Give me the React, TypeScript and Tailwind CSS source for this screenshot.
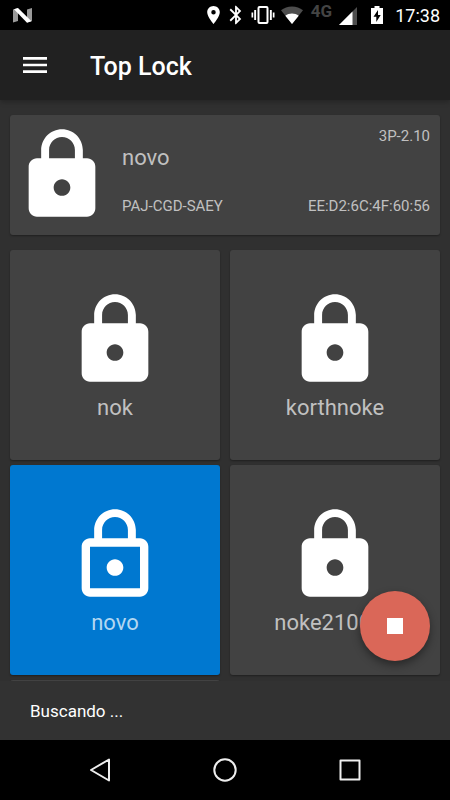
import { useState } from 'react';
import clsx from 'clsx';
import { MdBluetooth, MdMenu } from 'react-icons/md';

type LockItem = { id: number; name?: string };

const locks: LockItem[] = [
  { id: 1, name: 'nok' },
  { id: 2, name: 'korthnoke' },
  { id: 3, name: 'novo' },
  { id: 4, name: 'noke210000' },
  { id: 5 },
];

function LockIcon({ outline = false }: { outline?: boolean }) {
  return (
    <svg viewBox="0 0 24 24" className="size-[100px] shrink-0 fill-white" aria-hidden="true">
      {outline ? (
        <path d="M12 17c1.1 0 2-.9 2-2s-.9-2-2-2-2 .9-2 2 .9 2 2 2zm6-9h-1V6c0-2.76-2.24-5-5-5S7 3.24 7 6v2H6c-1.1 0-2 .9-2 2v10c0 1.1.9 2 2 2h12c1.1 0 2-.9 2-2V10c0-1.1-.9-2-2-2zM8.9 6c0-1.71 1.39-3.1 3.1-3.1s3.1 1.39 3.1 3.1v2H8.9V6zM18 20H6V10h12v10z" />
      ) : (
        <path d="M18 8h-1V6c0-2.76-2.24-5-5-5S7 3.24 7 6v2H6c-1.1 0-2 .9-2 2v10c0 1.1.9 2 2 2h12c1.1 0 2-.9 2-2V10c0-1.1-.9-2-2-2zm-6 9c-1.1 0-2-.9-2-2s.9-2 2-2 2 .9 2 2-.9 2-2 2zm3.1-9H8.9V6c0-1.71 1.39-3.1 3.1-3.1 1.71 0 3.1 1.39 3.1 3.1v2z" />
      )}
    </svg>
  );
}

function StatusBar() {
  return (
    <div className="flex h-[30px] shrink-0 items-center bg-black pl-[13px] pr-[10px] text-white">
      {/* Android N logo */}
      <svg width="19" height="15" viewBox="0 0 19 15" aria-hidden="true">
        <path d="M0 1.5 5 0v13L0 14.5zM14 1.5 19 0v13l-5 1.5z" fill="#9a9a9a" />
        <path d="M1 1.2 5 0l13.5 13.3-4.5 1.5z" fill="#fff" />
      </svg>
      <div className="ml-auto flex items-center">
        <svg width="13" height="18" viewBox="5 2 14 20" fill="#fff" aria-hidden="true">
          <path d="M12 2C8.13 2 5 5.13 5 9c0 5.25 7 13 7 13s7-7.75 7-13c0-3.87-3.13-7-7-7zm0 9.5a2.5 2.5 0 1 1 0-5 2.5 2.5 0 0 1 0 5z" />
        </svg>
        <MdBluetooth className="ml-[5px] size-[22px]" />
        <svg className="ml-1" width="24" height="18" viewBox="0 0 24 18" aria-hidden="true">
          <rect x="7.5" y="1" width="9" height="16" rx="1" fill="none" stroke="#fff" strokeWidth="2" />
          <path d="M3.2 4h1.9v10H3.2zM18.9 4h1.9v10h-1.9zM.5 6.5h1.7v5H.5zM21.8 6.5h1.7v5h-1.7z" fill="#fff" />
        </svg>
        <svg className="ml-[6px]" width="22" height="18" viewBox="0 0 22 18" aria-hidden="true">
          <path d="M0 4.3C3 1.8 6.8.5 11 .5s8 1.3 11 3.8L11 18z" fill="#4d4d4d" />
          <path d="M4.3 9.7C6.2 8.2 8.5 7.4 11 7.4s4.8.8 6.7 2.3L11 18z" fill="#fff" />
        </svg>
        <span className="ml-2 pb-2 text-[17px] leading-4 font-bold text-[#444]">4G</span>
        <svg className="ml-[7px] mt-[2px]" width="18" height="18" viewBox="0 0 18 18" aria-hidden="true">
          <path d="M18 0v18H0z" fill="#4d4d4d" />
          <path d="M13.5 4.5V18H0z" fill="#fff" />
        </svg>
        <svg className="ml-[14px]" width="12" height="18" viewBox="0 0 12 18" aria-hidden="true">
          <path d="M3.5 0h5v2H12v16H0V2h3.5z" fill="#fff" />
          <path d="M7 4 2.5 10.7h2.8V16L9.7 9H7z" fill="#000" />
        </svg>
        <time className="ml-3 pt-px text-[18px] leading-5">17:38</time>
      </div>
    </div>
  );
}

function LockTile({ lock, selected, onSelect }: { lock: LockItem; selected: boolean; onSelect: () => void }) {
  return (
    <button
      type="button"
      onClick={onSelect}
      className={clsx(
        'flex aspect-square flex-col items-center rounded-[3px] pt-10 shadow-[0_1px_2px_rgba(0,0,0,0.35)]',
        selected ? 'bg-[#0078d0]' : 'bg-[#424242]',
      )}
    >
      <LockIcon outline={selected} />
      {lock.name && (
        <span className={clsx('text-[22px] leading-9', selected ? 'text-[#b3d7f1]' : 'text-[#c0c0c0]')}>
          {lock.name}
        </span>
      )}
    </button>
  );
}

export default function App() {
  const [selectedId, setSelectedId] = useState(3);
  const [scanning, setScanning] = useState(true);

  return (
    <div className="flex h-screen flex-col bg-[#303030] font-[Roboto,sans-serif] text-white">
      <StatusBar />

      <header className="z-10 flex h-[70px] shrink-0 items-center bg-[#212121] pl-[19px] shadow-[0_2px_5px_rgba(0,0,0,0.25)]">
        <button type="button" aria-label="Menu">
          <MdMenu className="size-8" />
        </button>
        <h1 className="ml-[39px] pt-1 text-[25px] leading-8 font-medium">Top Lock</h1>
      </header>

      <main className="relative min-h-0 flex-1">
        <div className="h-full overflow-hidden px-[10px] pt-[15px]">
          <section className="flex rounded-[3px] bg-[#424242] py-[10px] pr-[10px] pl-[2px] text-[#c0c0c0] shadow-[0_1px_2px_rgba(0,0,0,0.35)]">
            <LockIcon />
            <div className="ml-[10px] flex flex-1 flex-col pt-px text-[15px] leading-5">
              <p className="text-right">3P-2.10</p>
              <h2 className="text-[22px] leading-8 -mt-1">novo</h2>
              <div className="mt-auto flex justify-between pb-[9px]">
                <span>PAJ-CGD-SAEY</span>
                <span>EE:D2:6C:4F:60:56</span>
              </div>
            </div>
          </section>

          <div className="mt-[15px] grid grid-cols-2 gap-x-[10px] gap-y-[5px]">
            {locks.map((lock) => (
              <LockTile
                key={lock.id}
                lock={lock}
                selected={lock.id === selectedId}
                onSelect={() => setSelectedId(lock.id)}
              />
            ))}
          </div>
        </div>

        <button
          type="button"
          aria-label="Stop"
          onClick={() => setScanning(false)}
          className="absolute right-5 bottom-5 flex size-[70px] items-center justify-center rounded-full bg-[#da6758] shadow-[0_4px_8px_rgba(0,0,0,0.4)]"
        >
          <span className="size-4 bg-white" />
        </button>
      </main>

      <footer className="flex h-[59px] shrink-0 items-center bg-[#323232] px-[30px] text-[17px] leading-5">
        <p role="status">{scanning ? 'Buscando ...' : ''}</p>
      </footer>

      <nav className="grid h-[60px] shrink-0 grid-cols-3 items-center bg-black px-[38px]">
        <button type="button" aria-label="Back" className="flex justify-center">
          <svg width="24" height="24" viewBox="0 0 24 24" fill="none" stroke="#eee" strokeWidth="2" strokeLinejoin="round" aria-hidden="true">
            <path d="M21 1.5v21L3 12z" />
          </svg>
        </button>
        <button type="button" aria-label="Home" className="flex justify-center">
          <svg width="24" height="24" viewBox="0 0 24 24" fill="none" stroke="#eee" strokeWidth="2" aria-hidden="true">
            <circle cx="12" cy="12" r="10.7" />
          </svg>
        </button>
        <button type="button" aria-label="Recent apps" className="flex justify-center">
          <svg width="24" height="24" viewBox="0 0 24 24" fill="none" stroke="#eee" strokeWidth="2" strokeLinejoin="round" aria-hidden="true">
            <rect x="2.5" y="2.5" width="19" height="19" />
          </svg>
        </button>
      </nav>
    </div>
  );
}
